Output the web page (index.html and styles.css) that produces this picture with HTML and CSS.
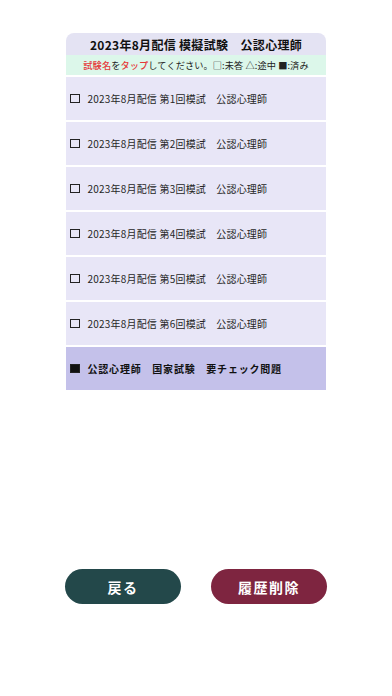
FILE: index.html
```html
<!DOCTYPE html>
<html lang="ja">
<head>
<meta charset="utf-8">
<link rel="stylesheet" href="styles.css">
</head>
<body>
<div class="page">
  <div class="panel">
    <div class="title">2023年8月配信 模擬試験　公認心理師</div>
    <div class="hint"><span class="red">試験名</span>を<span class="red">タップ</span>してください。□:未答 △:途中 ■:済み</div>
    <div class="row"><span class="box"></span><span class="label">2023年8月配信 第1回模試　公認心理師</span></div>
    <div class="row"><span class="box"></span><span class="label">2023年8月配信 第2回模試　公認心理師</span></div>
    <div class="row"><span class="box"></span><span class="label">2023年8月配信 第3回模試　公認心理師</span></div>
    <div class="row"><span class="box"></span><span class="label">2023年8月配信 第4回模試　公認心理師</span></div>
    <div class="row"><span class="box"></span><span class="label">2023年8月配信 第5回模試　公認心理師</span></div>
    <div class="row"><span class="box"></span><span class="label">2023年8月配信 第6回模試　公認心理師</span></div>
    <div class="row row-check"><span class="box box-filled"></span><span class="label label-bold">公認心理師　国家試験　要チェック問題</span></div>
  </div>
  <div class="actions">
    <button class="btn btn-back">戻る</button>
    <button class="btn btn-delete">履歴削除</button>
  </div>
</div>
</body>
</html>
```

FILE: styles.css
```css
html, body {
  margin: 0;
  padding: 0;
  background: #ffffff;
}
body {
  font-family: "Noto Sans CJK JP", "Noto Sans", sans-serif;
  width: 392px;
  height: 696px;
  overflow: hidden;
}
.page {
  display: flex;
  flex-direction: column;
  align-items: center;
  padding-top: 33px;
}
.panel {
  width: 260px;
  display: flex;
  flex-direction: column;
}
.title {
  height: 22px;
  background: #e4e3f3;
  border-radius: 8px 8px 0 0;
  display: flex;
  align-items: center;
  justify-content: center;
  font-size: 12px;
  font-weight: 700;
  letter-spacing: 0.3px;
  color: #111111;
}
.hint {
  height: 20px;
  background: #dcf7ea;
  display: flex;
  align-items: center;
  justify-content: center;
  font-size: 9.2px;
  letter-spacing: 0.1px;
  color: #222222;
}
.red {
  color: #e53a3a;
  font-weight: 500;
}
.row {
  height: 43px;
  margin-top: 2px;
  background: #e8e6f7;
  display: flex;
  align-items: center;
  padding-left: 4px;
  gap: 8px;
}
.row-check {
  background: #c4c1ea;
}
.box {
  width: 7.5px;
  height: 7.5px;
  border: 1.3px solid #222222;
  flex: none;
}
.box-filled {
  background: #111111;
}
.label {
  font-size: 10px;
  letter-spacing: 0.2px;
  color: #262626;
}
.label-bold {
  font-weight: 700;
  color: #111111;
  letter-spacing: 0.8px;
}
.actions {
  display: flex;
  gap: 30px;
  margin-top: 179px;
}
.btn {
  width: 116px;
  height: 35px;
  border: none;
  border-radius: 18px;
  color: #ffffff;
  font-family: "Noto Sans CJK JP", "Noto Sans", sans-serif;
  font-size: 14px;
  font-weight: 700;
  letter-spacing: 1.5px;
  padding: 0;
}
.btn-back {
  background: #23484a;
}
.btn-delete {
  background: #7e2540;
}
```
